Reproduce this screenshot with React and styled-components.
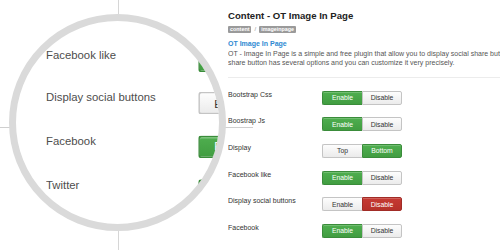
import React from "react";
import styled, { createGlobalStyle } from "styled-components";

const Global = createGlobalStyle`
  html, body { margin: 0; padding: 0; background: #fff; overflow: hidden; }
  body { font-family: "Liberation Sans", Arial, sans-serif; }
`;

const Page = styled.div`
  position: relative;
  display: flex;
  width: 500px;
  height: 250px;
  overflow: hidden;
  background: #fff;
`;

const LeftPane = styled.div`
  flex: 0 0 228px;
`;

const Panel = styled.div`
  flex: 1;
  min-width: 0;
  overflow: hidden;
  padding-top: 10px;
  display: flex;
  flex-direction: column;
`;

const Title = styled.h1`
  margin: 0;
  font-size: 9.6px;
  line-height: 12px;
  font-weight: bold;
  color: #222;
  white-space: nowrap;
`;

const Tags = styled.div`
  display: flex;
  align-items: center;
  gap: 3px;
  margin-top: 4px;
  height: 7px;
`;

const Tag = styled.span`
  display: inline-block;
  background: #9a9a9a;
  color: #fff;
  font-size: 5.4px;
  line-height: 7px;
  height: 7px;
  padding: 0 2px;
  border-radius: 1px;
  font-weight: bold;
`;

const Slash = styled.span`
  color: #999;
  font-size: 6px;
  line-height: 7px;
`;

const PluginName = styled.div`
  margin-top: 5.5px;
  font-size: 7px;
  line-height: 9px;
  font-weight: bold;
  color: #2f8ad2;
  white-space: nowrap;
`;

const Desc = styled.div`
  margin-top: 1.3px;
  font-size: 7px;
  line-height: 9.5px;
  color: #555;
`;

const DescLine = styled.div`
  white-space: nowrap;
`;

const Separator = styled.hr`
  margin: 9px 0 0;
  border: 0;
  border-top: 1px solid #ececec;
  height: 0;
  width: 100%;
`;

const List = styled.div`
  margin-top: ${(p) => (p.$flush ? "0" : "13px")};
  display: flex;
  flex-direction: column;
  gap: 12.6px;
  width: ${(p) => p.$width || "auto"};
`;

const Row = styled.div`
  display: flex;
  align-items: flex-start;
  height: 14px;
`;

const Label = styled.div`
  flex: 0 0 94px;
  font-size: 7px;
  line-height: 8px;
  color: ${(p) => (p.$soft ? "#4d4d4d" : "#333")};
  white-space: nowrap;
`;

const Group = styled.div`
  display: flex;
`;

const toneBg = {
  green: "linear-gradient(#4fae4f, #419d41)",
  red: "linear-gradient(#c63a33, #b6312a)",
  none: "linear-gradient(#fdfdfd, #ebebeb)",
};
const toneBorder = { green: "#3a8c3a", red: "#a12c26", none: "#c4c4c4" };

const Btn = styled.div`
  width: 40px;
  height: 14px;
  box-sizing: border-box;
  display: flex;
  align-items: center;
  justify-content: center;
  font-size: 6.8px;
  color: ${(p) => (p.$tone === "none" ? "#333" : "#fff")};
  background: ${(p) => toneBg[p.$tone]};
  border: 1px solid ${(p) => toneBorder[p.$tone]};
  border-radius: ${(p) => (p.$first ? "2px 0 0 2px" : "0 2px 2px 0")};
  ${(p) => (p.$first ? "border-right: none;" : "")}
  box-shadow: inset 0 1px 0 rgba(255, 255, 255, 0.2);
`;

const VLine = styled.div`
  position: absolute;
  left: 118px;
  top: 0;
  width: 1px;
  height: 250px;
  background: #d6d6d6;
`;

const HLine = styled.div`
  position: absolute;
  left: 0;
  top: 127px;
  width: 253px;
  height: 1px;
  background: #cfcfcf;
`;

const Lens = styled.div`
  position: absolute;
  left: 9px;
  top: 14px;
  width: 217px;
  height: 217px;
  box-sizing: border-box;
  border: 7px solid #dadada;
  border-radius: 50%;
  background: #fff;
  overflow: hidden;
  z-index: 2;
`;

const Magnified = styled.div`
  position: absolute;
  left: 30px;
  top: -101px;
  transform: scale(1.62);
  transform-origin: 0 0;
`;

const settings = [
  { label: "Bootstrap Css", opts: ["Enable", "Disable"], on: 0, tone: "green" },
  { label: "Boostrap Js", opts: ["Enable", "Disable"], on: 0, tone: "green" },
  { label: "Display", opts: ["Top", "Bottom"], on: 1, tone: "green" },
  { label: "Facebook like", opts: ["Enable", "Disable"], on: 0, tone: "green" },
  { label: "Display social buttons", opts: ["Enable", "Disable"], on: 1, tone: "red" },
  { label: "Facebook", opts: ["Enable", "Disable"], on: 0, tone: "green" },
  { label: "Twitter", opts: ["Enable", "Disable"], on: 0, tone: "green" },
];

function Settings({ soft, width, flush }) {
  return (
    <List $width={width} $flush={flush}>
      {settings.map((s) => (
        <Row key={s.label}>
          <Label $soft={soft}>{s.label}</Label>
          <Group>
            {s.opts.map((o, i) => (
              <Btn key={o} $first={i === 0} $tone={i === s.on ? s.tone : "none"}>
                {o}
              </Btn>
            ))}
          </Group>
        </Row>
      ))}
    </List>
  );
}

export default function App() {
  return (
    <>
      <Global />
      <Page>
        <LeftPane />
        <Panel>
          <Title>Content - OT Image In Page</Title>
          <Tags>
            <Tag>content</Tag>
            <Slash>/</Slash>
            <Tag>imageinpage</Tag>
          </Tags>
          <PluginName>OT Image In Page</PluginName>
          <Desc>
            <DescLine>
              OT - Image In Page is a simple and free plugin that allow you to display social share buttons on your website. Each
            </DescLine>
            <DescLine>
              share button has several options and you can customize it very precisely.
            </DescLine>
          </Desc>
          <Separator />
          <Settings />
        </Panel>
        <VLine />
        <HLine />
        <Lens>
          <Magnified>
            <Settings soft flush width="260px" />
          </Magnified>
        </Lens>
      </Page>
    </>
  );
}
